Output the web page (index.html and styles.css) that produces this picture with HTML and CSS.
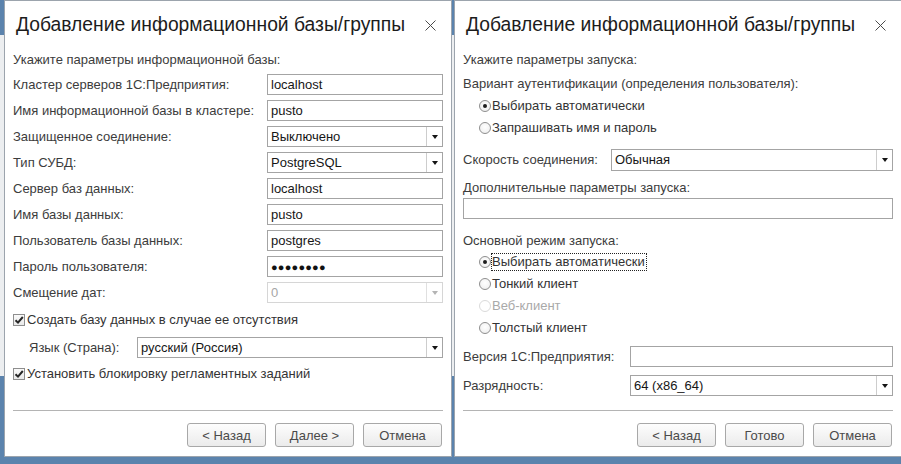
FILE: index.html
```html
<!DOCTYPE html>
<html lang="ru">
<head>
<meta charset="utf-8">
<title>Добавление информационной базы/группы</title>
<link rel="stylesheet" href="styles.css">
</head>
<body>
<div class="desk">
  <section class="dlg">
    <header class="head">
      <h1>Добавление информационной базы/группы</h1>
      <svg class="close" width="11" height="11" viewBox="0 0 11 11"><path d="M0.5 0.5L10.5 10.5M10.5 0.5L0.5 10.5" stroke="#4a4a4a" stroke-width="1" fill="none"/></svg>
    </header>
    <div class="body">
      <p class="text intro">Укажите параметры информационной базы:</p>
      <div class="form">
        <span class="lbl">Кластер серверов 1С:Предприятия:</span>
        <div class="field"><span class="val">localhost</span></div>
        <span class="lbl">Имя информационной базы в кластере:</span>
        <div class="field"><span class="val">pusto</span></div>
        <span class="lbl">Защищенное соединение:</span>
        <div class="field"><span class="val">Выключено</span><span class="arrow"></span></div>
        <span class="lbl">Тип СУБД:</span>
        <div class="field"><span class="val">PostgreSQL</span><span class="arrow"></span></div>
        <span class="lbl">Сервер баз данных:</span>
        <div class="field"><span class="val">localhost</span></div>
        <span class="lbl">Имя базы данных:</span>
        <div class="field"><span class="val">pusto</span></div>
        <span class="lbl">Пользователь базы данных:</span>
        <div class="field"><span class="val">postgres</span></div>
        <span class="lbl">Пароль пользователя:</span>
        <div class="field"><span class="val dots">●●●●●●●●</span></div>
        <span class="lbl">Смещение дат:</span>
        <div class="field disabled"><span class="val">0</span><span class="arrow"></span></div>
      </div>
      <div class="check c1"><span class="box"><svg width="10" height="10" viewBox="0 0 10 10"><path d="M1.5 5.2L4 7.6L8.8 2" stroke="#262626" stroke-width="2" fill="none"/></svg></span><span>Создать базу данных в случае ее отсутствия</span></div>
      <div class="lang">
        <span class="lbl">Язык (Страна):</span>
        <div class="field grow"><span class="val">русский (Россия)</span><span class="arrow"></span></div>
      </div>
      <div class="check c2"><span class="box"><svg width="10" height="10" viewBox="0 0 10 10"><path d="M1.5 5.2L4 7.6L8.8 2" stroke="#262626" stroke-width="2" fill="none"/></svg></span><span>Установить блокировку регламентных заданий</span></div>
    </div>
    <footer class="foot">
      <button class="btn">&lt; Назад</button>
      <button class="btn">Далее &gt;</button>
      <button class="btn">Отмена</button>
    </footer>
  </section>

  <section class="dlg">
    <header class="head">
      <h1>Добавление информационной базы/группы</h1>
      <svg class="close" width="11" height="11" viewBox="0 0 11 11"><path d="M0.5 0.5L10.5 10.5M10.5 0.5L0.5 10.5" stroke="#4a4a4a" stroke-width="1" fill="none"/></svg>
    </header>
    <div class="body">
      <p class="text intro">Укажите параметры запуска:</p>
      <p class="text auth">Вариант аутентификации (определения пользователя):</p>
      <div class="radios r1">
        <div class="radio on"><span class="dot"></span><span>Выбирать автоматически</span></div>
        <div class="radio"><span class="dot"></span><span>Запрашивать имя и пароль</span></div>
      </div>
      <div class="row speed">
        <span class="lbl w148">Скорость соединения:</span>
        <div class="field grow tall"><span class="val">Обычная</span><span class="arrow"></span></div>
      </div>
      <p class="text extra">Дополнительные параметры запуска:</p>
      <div class="field wide"></div>
      <p class="text mode">Основной режим запуска:</p>
      <div class="radios r2">
        <div class="radio on"><span class="dot"></span><span class="focus">Выбирать автоматически</span></div>
        <div class="radio"><span class="dot"></span><span>Тонкий клиент</span></div>
        <div class="radio off"><span class="dot"></span><span>Веб-клиент</span></div>
        <div class="radio"><span class="dot"></span><span>Толстый клиент</span></div>
      </div>
      <div class="row ver">
        <span class="lbl w167">Версия 1С:Предприятия:</span>
        <div class="field grow"></div>
      </div>
      <div class="row bits">
        <span class="lbl w167">Разрядность:</span>
        <div class="field grow"><span class="val">64 (x86_64)</span><span class="arrow"></span></div>
      </div>
    </div>
    <footer class="foot">
      <button class="btn">&lt; Назад</button>
      <button class="btn">Готово</button>
      <button class="btn">Отмена</button>
    </footer>
  </section>
</div>
</body>
</html>
```

FILE: styles.css
```css
* { box-sizing: border-box; }
html, body { margin: 0; padding: 0; }
body {
  width: 901px;
  height: 464px;
  overflow: hidden;
  font-family: "Liberation Sans", Arial, sans-serif;
  font-size: 13px;
  line-height: 16px;
  color: #3c3c3c;
  background: linear-gradient(to bottom, #5b83ad 0, #5b83ad 35px, #eceef0 35px, #eceef0 376px, #5b83ad 376px);
}
.desk {
  display: flex;
  gap: 2px;
  padding-left: 4px;
  align-items: flex-start;
}
.dlg {
  flex: none;
  width: 448px;
  height: 457px;
  background: #fff;
  border: 1px solid #9ca4ad;
  display: flex;
  flex-direction: column;
}
.head {
  height: 46px;
  flex: none;
  display: flex;
  align-items: center;
  padding: 0 15px 0 11px;
}
.head h1 {
  flex: 1;
  margin: 0;
  font-size: 19.3px;
  font-weight: normal;
  line-height: 23px;
  color: #1c1c1c;
  white-space: nowrap;
}
.close { display: block; margin-top: 2px; }
.body {
  flex: 1;
  padding: 5px 8px 0;
  display: flex;
  flex-direction: column;
}
.text { margin: 0; height: 16px; white-space: nowrap; }
.form {
  margin-top: 6px;
  display: grid;
  grid-template-columns: 254px 1fr;
  grid-auto-rows: 21px;
  row-gap: 5px;
  align-items: center;
}
.lbl { white-space: nowrap; }
.field {
  height: 21px;
  border: 1px solid #a4a4a4;
  display: flex;
  align-items: center;
  background: #fff;
  color: #161616;
}
.field.tall { height: 22px; }
.field .val { flex: 1; padding-left: 3px; white-space: nowrap; }
.field .dots { font-size: 11px; letter-spacing: 0.2px; color: #111; }
.field .arrow {
  width: 16px;
  align-self: stretch;
  border-left: 1px solid #cdcdcd;
  display: flex;
  align-items: center;
  justify-content: center;
}
.field .arrow::after {
  content: "";
  border-top: 4px solid #141414;
  border-left: 3.5px solid transparent;
  border-right: 3.5px solid transparent;
}
.field.disabled { border-color: #d6d6d6; color: #a6a6a6; }
.field.disabled .arrow { border-left-color: #e0e0e0; }
.field.disabled .arrow::after { border-top-color: #b4b4b4; }
.field.grow { flex: 1; }
.field.wide { margin-top: 2px; }

.check {
  height: 20px;
  display: flex;
  align-items: center;
  gap: 2px;
  color: #333;
  white-space: nowrap;
}
.check.c1 { margin-top: 7px; }
.check.c2 { margin-top: 6px; }
.box {
  width: 12px;
  height: 12px;
  border: 1px solid #8e8e8e;
  background: linear-gradient(#fafafa, #e9e9e9);
  display: flex;
  align-items: center;
  justify-content: center;
}
.lang {
  margin-top: 7px;
  display: flex;
  align-items: center;
  padding-left: 16px;
}
.lang .lbl { width: 108px; }

.row { display: flex; align-items: center; }
.w148 { width: 148px; }
.w167 { width: 167px; }
.auth { margin-top: 8px; }
.radios { display: flex; flex-direction: column; padding-left: 16px; }
.radios.r1 { margin-top: 3px; }
.radios.r2 { margin-top: 2px; }
.radio {
  height: 22px;
  display: flex;
  align-items: center;
  gap: 1px;
  white-space: nowrap;
  color: #333;
}
.radio .dot {
  width: 12px;
  height: 12px;
  border-radius: 50%;
  border: 1px solid #8e8e8e;
  background: radial-gradient(circle at 50% 40%, #fff, #ececec);
  display: flex;
  align-items: center;
  justify-content: center;
}
.radio.on .dot::after {
  content: "";
  width: 4px;
  height: 4px;
  border-radius: 50%;
  background: #1e1e1e;
}
.radio.off { color: #a9a9a9; }
.radio.off .dot { border-color: #dadada; background: #fff; }
.focus { outline: 1px dotted #222; outline-offset: 0; padding: 0 1px 0 0; }
.speed { margin-top: 10px; }
.extra { margin-top: 9px; }
.mode { margin-top: 14px; }
.ver { margin-top: 7px; }
.bits { margin-top: 8px; }

.foot {
  flex: none;
  margin: 0 8px;
  border-top: 1px solid #b4b4b4;
  padding: 12px 1px 9px 0;
  display: flex;
  justify-content: flex-end;
  gap: 9px;
}
.btn {
  width: 79px;
  height: 24px;
  padding: 0;
  margin: 0;
  border: 1px solid #a8a8a8;
  border-radius: 3px;
  background: linear-gradient(#fdfdfd, #ebebeb);
  font-family: "Liberation Sans", Arial, sans-serif;
  font-size: 13px;
  color: #4a4a4a;
}
```
